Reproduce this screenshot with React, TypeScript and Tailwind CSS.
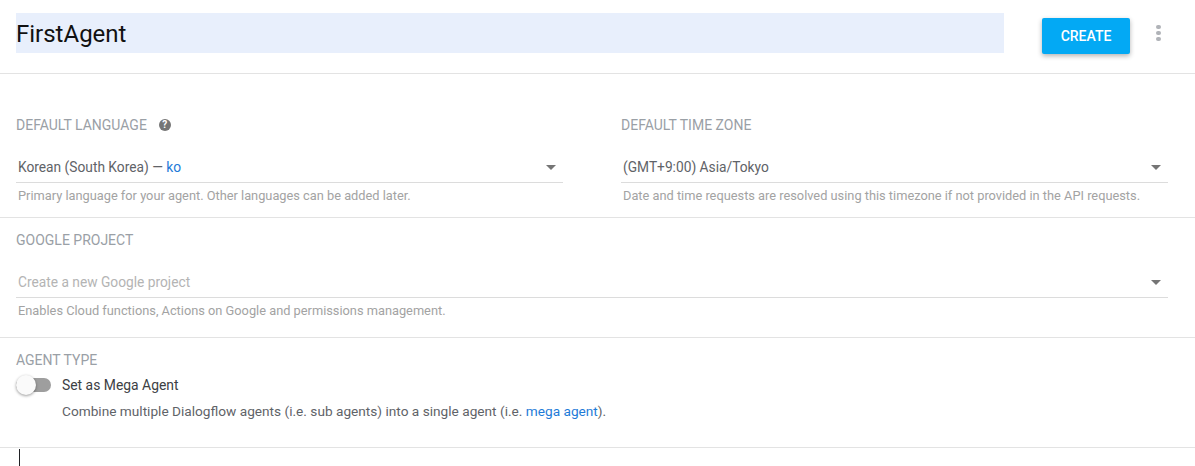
import React from 'react';

const Caret: React.FC = () => (
  <svg width="10" height="5" viewBox="0 0 10 5" className="shrink-0">
    <path d="M0 0 L10 0 L5 5 Z" fill="#757575" />
  </svg>
);

const Field: React.FC<{ hint: string; placeholder?: boolean; children: React.ReactNode }> = ({ hint, placeholder, children }) => (
  <div>
    <div className="flex items-center justify-between h-[31px] border-b border-[#dcdcdc] pl-[2px] pr-[7px]">
      <span className={`text-[13.75px] leading-[30px] ${placeholder ? 'text-[#b4b4b4]' : 'text-[#5f6368]'}`}>{children}</span>
      <Caret />
    </div>
    <p className="text-[12.8px] leading-[14px] mt-[6px] pl-[2px] text-[#a3a3a3]">{hint}</p>
  </div>
);

const Label: React.FC<{ children: React.ReactNode }> = ({ children }) => (
  <span className="text-[14px] leading-[16px] text-[#9aa0a6] uppercase">{children}</span>
);

export default function App() {
  return (
    <div className="w-[1195px] h-[466px] overflow-hidden bg-white font-['Roboto',sans-serif]">
      <header className="h-[74px] border-b border-[#e3e3e3] flex items-start pl-4">
        <div className="w-[988px] h-[40px] mt-[13px] bg-[#e8effc] text-[24px] leading-[42px] text-[#111111]">FirstAgent</div>
        <button className="ml-[38px] mt-[18px] w-[88px] h-[36px] rounded-[2px] bg-[#03a9f4] text-white text-[14px] font-medium shadow-[0_2px_5px_rgba(0,0,0,0.3)]">
          CREATE
        </button>
        <div className="ml-[26px] mt-[25px] flex flex-col gap-[2px]">
          <span className="w-[5px] h-[4px] rounded-full bg-[#b0b3b8]" />
          <span className="w-[5px] h-[4px] rounded-full bg-[#b0b3b8]" />
          <span className="w-[5px] h-[4px] rounded-full bg-[#b0b3b8]" />
        </div>
      </header>

      <section className="h-[144px] border-b border-[#e3e3e3] flex pl-4 pt-[43px]">
        <div className="w-[547px]">
          <div className="flex items-center h-[16px]">
            <Label>Default Language</Label>
            <span className="ml-[12px] w-[12px] h-[12px] rounded-full bg-[#757575] text-white text-[10px] leading-[12px] font-bold text-center">?</span>
          </div>
          <div className="mt-[19px]">
            <Field hint="Primary language for your agent. Other languages can be added later.">
              Korean (South Korea) — <span className="text-[#1e7bd8]">ko</span>
            </Field>
          </div>
        </div>
        <div className="w-[547px] ml-[58px]">
          <div className="flex items-center h-[16px]">
            <Label>Default Time Zone</Label>
          </div>
          <div className="mt-[19px]">
            <Field hint="Date and time requests are resolved using this timezone if not provided in the API requests.">
              (GMT+9:00) Asia/Tokyo
            </Field>
          </div>
        </div>
      </section>

      <section className="h-[120px] border-b border-[#e3e3e3] pl-4 pt-[14px]">
        <div className="w-[1152px]">
          <div className="h-[16px] flex items-center">
            <Label>Google Project</Label>
          </div>
          <div className="mt-[19px]">
            <Field placeholder hint="Enables Cloud functions, Actions on Google and permissions management.">
              Create a new Google project
            </Field>
          </div>
        </div>
      </section>

      <section className="h-[110px] border-b border-[#e3e3e3] pl-4 pt-[14px]">
        <div className="h-[16px] flex items-center">
          <Label>Agent Type</Label>
        </div>
        <div className="flex items-center mt-[6px] h-[22px]">
          <div className="relative w-[35px] h-[14px] rounded-full bg-[#9e9e9e]">
            <span className="absolute left-0 top-[-3px] w-[20px] h-[20px] rounded-full bg-[#fafafa] shadow-[0_1px_3px_rgba(0,0,0,0.4)]" />
          </div>
          <span className="ml-[11px] text-[13.9px] text-[#3c4043]">Set as Mega Agent</span>
        </div>
        <p className="ml-[46px] mt-[5px] text-[13.67px] leading-[20px] text-[#5f6368]">
          Combine multiple Dialogflow agents (i.e. sub agents) into a single agent (i.e. <span className="text-[#1e7bd8]">mega agent</span>).
        </p>
      </section>

      <div className="ml-[19px] mt-[1px] w-px h-[18px] bg-[#202124]" />
    </div>
  );
}
